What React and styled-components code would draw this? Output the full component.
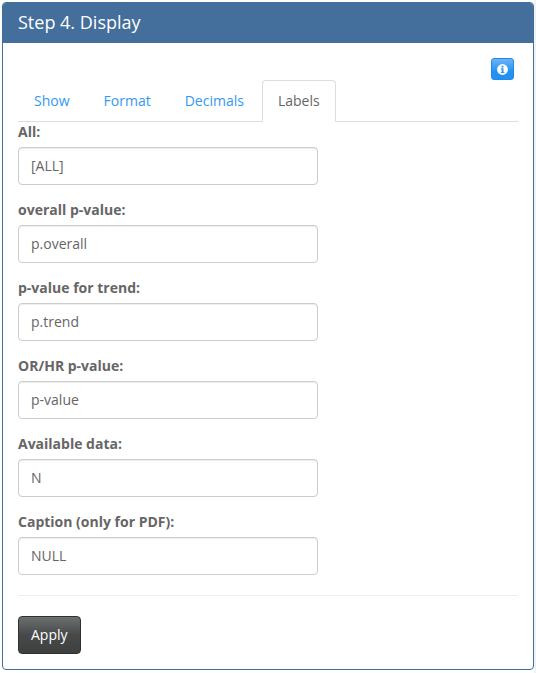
import React from "react";
import styled, { createGlobalStyle } from "styled-components";

const GlobalStyle = createGlobalStyle`
  *, *::before, *::after { box-sizing: border-box; }
  body {
    margin: 0;
    background: #fff;
    color: #666;
    font: 14px/20px "Open Sans", "Noto Sans", sans-serif;
  }
`;

const Page = styled.main`
  height: 673px;
  padding: 2px 0 0 2px;
  border-right: 2px solid #f2f2f2;
  overflow: hidden;
`;

const Panel = styled.section`
  width: 532px;
  height: 668px;
  border: 1px solid #446e9b;
  border-radius: 4px;
  background: #fff;
`;

const PanelHeading = styled.header`
  height: 40px;
  padding: 9px 15px 11px;
  background: #446e9b;
  border-radius: 3px 3px 0 0;
`;

const PanelTitle = styled.h3`
  margin: 0;
  font-size: 18px;
  font-weight: 400;
  line-height: 20px;
  color: #fff;
`;

const PanelBody = styled.div`
  padding: 15px;
`;

const Toolbar = styled.div`
  display: flex;
  justify-content: flex-end;
  height: 22px;
  padding-right: 4px;
`;

const InfoButton = styled.button`
  display: flex;
  align-items: center;
  justify-content: center;
  width: 23px;
  height: 22px;
  padding: 0;
  border: 1px solid #1f89ec;
  border-radius: 3px;
  background: linear-gradient(#6db3f6, #3399f3 50%, #2491f2 60%, #2491f2);
`;

const Tabs = styled.nav`
  display: flex;
  height: 42px;
  border-bottom: 1px solid #ddd;
`;

const Tab = styled.button`
  height: 42px;
  margin: 0 2px 0 0;
  padding: 10px 15px;
  border: 1px solid ${(p) => (p.$active ? "#ddd" : "transparent")};
  border-bottom-color: ${(p) => (p.$active ? "#fff" : "transparent")};
  border-radius: 4px 4px 0 0;
  background: ${(p) => (p.$active ? "#fff" : "transparent")};
  color: ${(p) => (p.$active ? "#666" : "#3399f3")};
  font: inherit;
`;

const Field = styled.div`
  margin-bottom: 15px;
`;

const Label = styled.label`
  display: block;
  margin-bottom: 5px;
  font-weight: 700;
`;

const Input = styled.input`
  display: block;
  width: 300px;
  height: 38px;
  padding: 7px 12px 9px;
  border: 1px solid #ccc;
  border-radius: 4px;
  background: #fff;
  box-shadow: inset 0 1px 1px rgba(0, 0, 0, 0.075);
  color: #666;
  font: inherit;
`;

const Divider = styled.hr`
  margin: 20px 0;
  border: 0;
  border-top: 1px solid #eee;
`;

const ApplyButton = styled.button`
  display: block;
  height: 38px;
  padding: 8px 12px;
  border: 1px solid #2f3030;
  border-radius: 4px;
  background: linear-gradient(#6d7070, #474949 50%, #3e4040);
  color: #fff;
  font: inherit;
`;

const tabs = ["Show", "Format", "Decimals", "Labels"];

const fields = [
  { id: "all", label: "All:", value: "[ALL]" },
  { id: "overall", label: "overall p-value:", value: "p.overall" },
  { id: "trend", label: "p-value for trend:", value: "p.trend" },
  { id: "ratio", label: "OR/HR p-value:", value: "p-value" },
  { id: "available", label: "Available data:", value: "N" },
  { id: "caption", label: "Caption (only for PDF):", value: "NULL" },
];

const InfoIcon = () => (
  <svg width="11" height="11" viewBox="0 0 11 11" aria-hidden="true">
    <circle cx="5.5" cy="5.5" r="5.4" fill="#fff" />
    <path d="M4.6 1.8h1.9v1.6H4.6zM3.9 4.3h2.6v3.6h.9v1.2H3.9V7.9h.8V5.4h-.8z" fill="#2c91ee" />
  </svg>
);

export default function App() {
  return (
    <>
      <GlobalStyle />
      <Page>
        <Panel>
          <PanelHeading>
            <PanelTitle>Step 4. Display</PanelTitle>
          </PanelHeading>
          <PanelBody>
            <Toolbar>
              <InfoButton aria-label="Information">
                <InfoIcon />
              </InfoButton>
            </Toolbar>
            <Tabs>
              {tabs.map((name) => (
                <Tab key={name} $active={name === "Labels"}>
                  {name}
                </Tab>
              ))}
            </Tabs>
            {fields.map(({ id, label, value }) => (
              <Field key={id}>
                <Label htmlFor={id}>{label}</Label>
                <Input id={id} defaultValue={value} />
              </Field>
            ))}
            <Divider />
            <ApplyButton>Apply</ApplyButton>
          </PanelBody>
        </Panel>
      </Page>
    </>
  );
}
